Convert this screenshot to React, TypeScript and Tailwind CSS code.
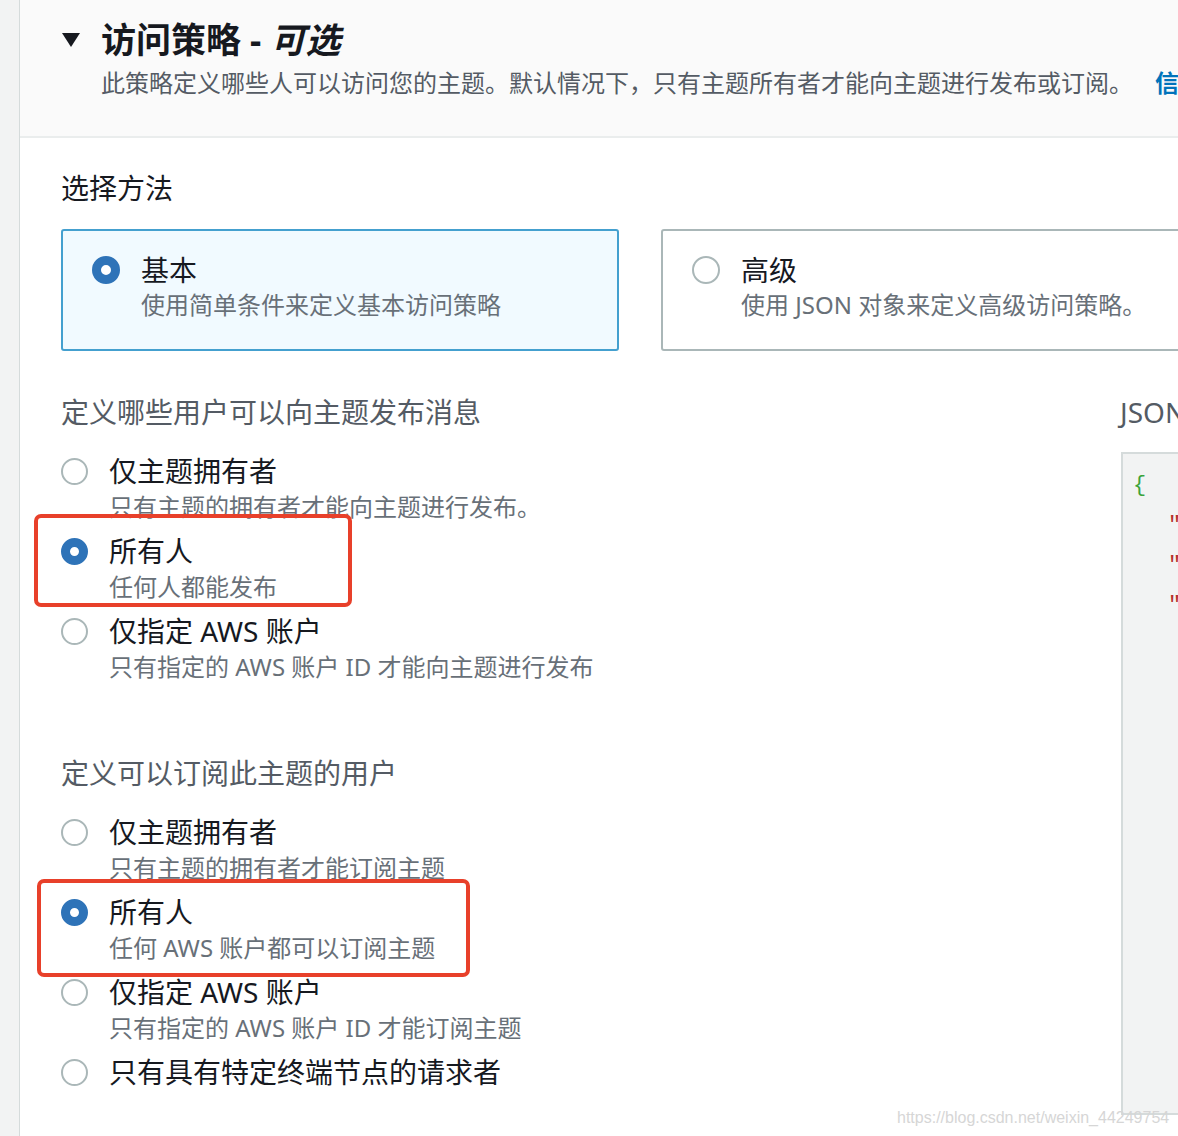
const font = { fontFamily: '"Noto Sans", "Noto Sans CJK SC", sans-serif' };

type Option = { label: string; desc?: string; selected?: boolean };

const publishOptions: Option[] = [
  { label: '仅主题拥有者', desc: '只有主题的拥有者才能向主题进行发布。' },
  { label: '所有人', desc: '任何人都能发布', selected: true },
  { label: '仅指定 AWS 账户', desc: '只有指定的 AWS 账户 ID 才能向主题进行发布' },
];

const subscribeOptions: Option[] = [
  { label: '仅主题拥有者', desc: '只有主题的拥有者才能订阅主题' },
  { label: '所有人', desc: '任何 AWS 账户都可以订阅主题', selected: true },
  { label: '仅指定 AWS 账户', desc: '只有指定的 AWS 账户 ID 才能订阅主题' },
  { label: '只有具有特定终端节点的请求者' },
];

function Radio({ selected, size = 'w-[27px] h-[27px]' }: { selected?: boolean; size?: string }) {
  return selected ? (
    <span className={`${size} shrink-0 rounded-full border-[9px] border-[#2e73b8] bg-white`} />
  ) : (
    <span className={`${size} shrink-0 rounded-full border-2 border-[#aab7b8] bg-white`} />
  );
}

function RadioItem({ opt }: { opt: Option }) {
  return (
    <div className="flex h-[80px] items-start">
      <div className="flex h-[36px] items-center">
        <Radio selected={opt.selected} />
      </div>
      <div className="ml-[21px] flex flex-col">
        <span className="text-[28px] leading-[36px] text-[#16191f] whitespace-nowrap">{opt.label}</span>
        {opt.desc && (
          <span className="text-[24px] leading-[36px] text-[#687078] whitespace-nowrap">{opt.desc}</span>
        )}
      </div>
    </div>
  );
}

export default function App() {
  return (
    <div className="relative flex w-[1178px] h-[1136px] overflow-hidden bg-white" style={font}>
      {/* 左侧边栏 */}
      <div className="w-[20px] shrink-0 bg-[#f2f3f3] border-r border-[#d5dbdb]" />

      <div className="flex flex-1 flex-col min-w-0">
        {/* 头部 */}
        <div className="h-[138px] shrink-0 bg-[#fafafa] border-b-2 border-[#eaeded] pl-[42px] pt-[18px]">
          <div className="flex items-center h-[44px]">
            <svg width="18" height="14" viewBox="0 0 18 14" className="shrink-0">
              <polygon points="0,0 18,0 9,14" fill="#16191f" />
            </svg>
            <h2 className="ml-[21px] text-[35px] leading-[44px] font-bold text-[#16191f] whitespace-nowrap">
              访问策略 - <i>可选</i>
            </h2>
          </div>
          <p className="mt-[5px] ml-[39px] text-[24px] leading-[32px] text-[#545b64] whitespace-nowrap">
            此策略定义哪些人可以访问您的主题。默认情况下，只有主题所有者才能向主题进行发布或订阅。
            <span className="ml-[22px] font-bold text-[#0073bb]">信息</span>
          </p>
        </div>

        {/* 内容 */}
        <div className="pl-[41px] pt-[32px]">
          <div className="text-[28px] leading-[36px] text-[#16191f]">选择方法</div>

          <div className="mt-[23px] flex gap-[42px]">
            <div className="w-[558px] h-[122px] shrink-0 rounded-[3px] border-2 border-[#44a0cf] bg-[#f1faff] pl-[29px] pt-[21px] flex items-start">
              <div className="flex h-[36px] items-center">
                <Radio selected size="w-[28px] h-[28px]" />
              </div>
              <div className="ml-[21px] flex flex-col">
                <span className="text-[28px] leading-[36px] text-[#16191f]">基本</span>
                <span className="text-[24px] leading-[34px] text-[#687078] whitespace-nowrap">使用简单条件来定义基本访问策略</span>
              </div>
            </div>
            <div className="w-[558px] h-[122px] shrink-0 rounded-[3px] border-2 border-[#aab7b8] bg-white pl-[29px] pt-[21px] flex items-start">
              <div className="flex h-[36px] items-center">
                <Radio size="w-[28px] h-[28px]" />
              </div>
              <div className="ml-[21px] flex flex-col">
                <span className="text-[28px] leading-[36px] text-[#16191f]">高级</span>
                <span className="text-[24px] leading-[34px] text-[#687078] whitespace-nowrap">使用 JSON 对象来定义高级访问策略。</span>
              </div>
            </div>
          </div>

          <div className="mt-[43px] flex">
            {/* 左列 */}
            <div className="w-[1059px] shrink-0">
              <div className="text-[28px] leading-[36px] text-[#545b64]">定义哪些用户可以向主题发布消息</div>
              <div className="mt-[23px] flex flex-col">
                {publishOptions.map((o, i) => (
                  <RadioItem key={i} opt={o} />
                ))}
              </div>

              <div className="mt-[62px] text-[28px] leading-[36px] text-[#545b64]">定义可以订阅此主题的用户</div>
              <div className="mt-[23px] flex flex-col">
                {subscribeOptions.map((o, i) => (
                  <RadioItem key={i} opt={o} />
                ))}
              </div>
            </div>

            {/* JSON 预览 */}
            <div className="flex flex-col">
              <div className="text-[28px] leading-[36px] text-[#545b64] whitespace-nowrap">JSON 预览</div>
              <div className="mt-[22px] ml-[1px] h-[663px] w-[400px] border-2 border-[#d5dbdb] bg-[#f2f3f3] pl-[10px] pt-[12px] font-mono text-[22px] whitespace-nowrap">
                <div className="leading-[40px] text-[#3ca33a]">{'{'}</div>
                <div className="pl-[35px] leading-[40px] text-[#b5302a]">"Version": "2008-10-17",</div>
                <div className="pl-[35px] leading-[40px] text-[#b5302a]">"Id": "__default_policy_ID",</div>
                <div className="pl-[35px] leading-[40px] text-[#b5302a]">"Statement": [</div>
              </div>
            </div>
          </div>
        </div>
      </div>

      {/* 标注框 */}
      <div className="absolute left-[34px] top-[514px] w-[318px] h-[93px] rounded-[7px] border-4 border-[#e8402a]" />
      <div className="absolute left-[37px] top-[879px] w-[433px] h-[98px] rounded-[7px] border-4 border-[#e8402a]" />

      {/* 水印 */}
      <div
        className="absolute left-[897px] top-[1107px] text-[16px] leading-[22px] text-[#d6d6d6] whitespace-nowrap"
        style={{ fontFamily: '"Liberation Sans", Arial, sans-serif' }}
      >
        https://blog.csdn.net/weixin_44249754
      </div>
    </div>
  );
}
